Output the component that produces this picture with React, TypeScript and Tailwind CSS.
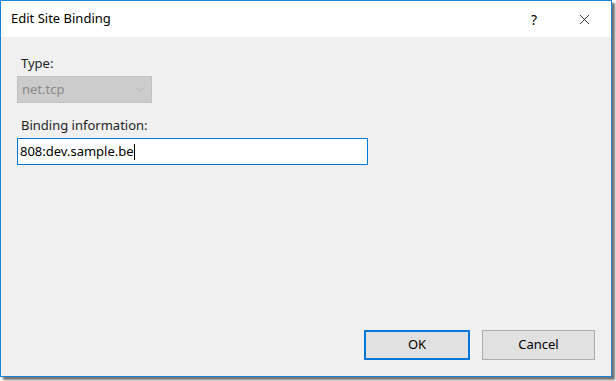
import { ChevronDown, X } from 'lucide-react'

export default function App() {
  return (
    <div className="w-[616px] h-[381px] bg-white font-['Noto_Sans','Open_Sans',sans-serif]">
      <div className="flex flex-col w-[612px] h-[377px] border border-[#1883d7] bg-[#f0f0f0] shadow-[3px_3px_2px_rgba(0,0,0,0.55)]">
        {/* title bar */}
        <div className="flex items-center h-[36px] bg-white pl-[10px] shrink-0">
          <span className="text-[13px] text-black">Edit Site Binding</span>
          <span className="ml-auto text-[14px] text-black mr-[39px]">?</span>
          <X className="w-[17px] h-[17px] mr-[18px] text-black" strokeWidth={1.1} />
        </div>

        {/* body */}
        <div className="flex flex-col flex-1 pl-[16px] pr-[16px] pt-[18px] pb-[16px]">
          <label className="text-[13px] text-[#1e1e1e] leading-[16px] ml-[4px]">Type:</label>
          <div className="flex items-center w-[135px] h-[27px] mt-[5px] px-[4px] bg-[#cccccc] border border-[#c2c2c2]">
            <span className="text-[13px] text-[#8a8a8a]">net.tcp</span>
            <ChevronDown className="ml-auto w-[13px] h-[13px] text-[#a8a8a8]" strokeWidth={1.1} />
          </div>

          <label className="text-[13px] text-[#1e1e1e] leading-[16px] ml-[4px] mt-[14px]">Binding information:</label>
          <div className="flex items-center w-[351px] h-[27px] mt-[5px] px-[2px] bg-white border border-[#0078d7]">
            <span className="text-[13px] text-black">808:dev.sample.be</span>
            <span className="w-px h-[16px] bg-black" />
          </div>

          <div className="flex justify-end gap-[12px] mt-auto">
            <button className="w-[106px] h-[30px] bg-[#e1e1e1] border-2 border-[#0078d7] text-[13px] text-black">OK</button>
            <button className="w-[113px] h-[30px] bg-[#e1e1e1] border border-[#adadad] text-[13px] text-black">Cancel</button>
          </div>
        </div>
      </div>
    </div>
  )
}
